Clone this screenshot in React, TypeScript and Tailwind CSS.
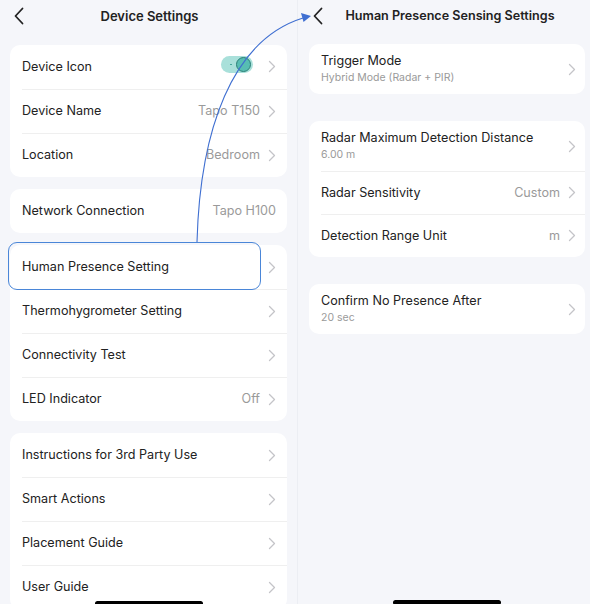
import React from "react";

const Chevron = () => (
  <svg width="8" height="13" viewBox="0 0 8 13" className="shrink-0">
    <path d="M1.5 1.5 L6.5 6.5 L1.5 11.5" fill="none" stroke="#c4c4c8" strokeWidth="1.3" strokeLinecap="round" strokeLinejoin="round" />
  </svg>
);

const Back = () => (
  <svg width="12" height="18" viewBox="0 0 12 18">
    <path d="M9.5 1.5 L2.5 9 L9.5 16.5" fill="none" stroke="#222" strokeWidth="1.8" strokeLinecap="round" strokeLinejoin="round" />
  </svg>
);

type Row = { label: string; value?: React.ReactNode; chevron?: boolean };

const LeftCard = ({ rows }: { rows: Row[] }) => (
  <div className="bg-white rounded-[10px] pl-3 overflow-hidden shrink-0">
    {rows.map((r, i) => (
      <div key={i} className={`h-[44px] flex items-center pr-[11px] ${i > 0 ? "border-t border-[#efefef]" : ""}`}>
        <span className="text-[12.6px] text-[#222]">{r.label}</span>
        <div className="ml-auto flex items-center gap-[8px]">
          {r.value && <span className="text-[12.6px] text-[#9a9a9a]">{r.value}</span>}
          {r.chevron !== false && <Chevron />}
        </div>
      </div>
    ))}
  </div>
);

const Toggle = () => (
  <span className="relative inline-flex items-center w-[32px] h-[17px] rounded-full bg-[#a9e0da] mr-[7px]">
    <span className="absolute left-[9px] top-[8px] w-[1.5px] h-[1.5px] rounded-full bg-[#3a9e93]" />
    <span className="absolute right-[2px] top-[1px] w-[15px] h-[15px] rounded-full bg-[#57bdb2] border border-[#2b7f76]" />
  </span>
);

type RRow = { label: string; sub?: string; value?: string };

const RightCard = ({ rows }: { rows: RRow[] }) => (
  <div className="bg-white rounded-[10px] pl-3 overflow-hidden">
    {rows.map((r, i) => (
      <div
        key={i}
        className={`${r.sub ? "h-[50px]" : "h-[43px]"} flex items-center pr-[9px] ${i > 0 ? "border-t border-[#efefef]" : ""}`}
      >
        <div className="flex flex-col">
          <span className="text-[12.6px] text-[#222] leading-[16px]">{r.label}</span>
          {r.sub && <span className="text-[10.5px] text-[#9a9a9a] leading-[14px] mt-[2px]">{r.sub}</span>}
        </div>
        <div className="ml-auto flex items-center gap-[8px]">
          {r.value && <span className="text-[12.6px] text-[#9a9a9a]">{r.value}</span>}
          <Chevron />
        </div>
      </div>
    ))}
  </div>
);

export default function App() {
  return (
    <div
      className="relative w-[590px] h-[604px] bg-[#f5f6fa] flex overflow-hidden"
      style={{ fontFamily: "Inter, 'Noto Sans', sans-serif" }}
    >
      {/* Left screen */}
      <div className="w-[297px] shrink-0 flex flex-col px-[10px]">
        <div className="h-[33px] shrink-0 relative flex items-center justify-center">
          <span className="absolute left-[3px] top-[7px]"><Back /></span>
          <span className="text-[13px] font-semibold text-[#222] ml-[2px] mt-[1px]">Device Settings</span>
        </div>
        <div className="flex flex-col gap-[12px] mt-[12px] shrink-0">
          <LeftCard
            rows={[
              { label: "Device Icon", value: <Toggle /> },
              { label: "Device Name", value: "Tapo T150" },
              { label: "Location", value: "Bedroom" },
            ]}
          />
          <LeftCard rows={[{ label: "Network Connection", value: "Tapo H100", chevron: false }]} />
          <LeftCard
            rows={[
              { label: "Human Presence Setting" },
              { label: "Thermohygrometer Setting" },
              { label: "Connectivity Test" },
              { label: "LED Indicator", value: "Off" },
            ]}
          />
          <LeftCard
            rows={[
              { label: "Instructions for 3rd Party Use" },
              { label: "Smart Actions" },
              { label: "Placement Guide" },
              { label: "User Guide" },
            ]}
          />
        </div>
      </div>

      {/* Divider */}
      <div className="w-px shrink-0 bg-[#eceef3]" />

      {/* Right screen */}
      <div className="flex-1 flex flex-col pl-[11px] pr-[5px]">
        <div className="h-[33px] shrink-0 relative flex items-center justify-center">
          <span className="absolute left-[3px] top-[7px]"><Back /></span>
          <span className="text-[12.6px] font-semibold text-[#222] ml-[6px]">Human Presence Sensing Settings</span>
        </div>
        <div className="mt-[11px]">
          <RightCard rows={[{ label: "Trigger Mode", sub: "Hybrid Mode (Radar + PIR)" }]} />
        </div>
        <div className="mt-[27px]">
          <RightCard
            rows={[
              { label: "Radar Maximum Detection Distance", sub: "6.00 m" },
              { label: "Radar Sensitivity", value: "Custom" },
              { label: "Detection Range Unit", value: "m" },
            ]}
          />
        </div>
        <div className="mt-[27px]">
          <RightCard rows={[{ label: "Confirm No Presence After", sub: "20 sec" }]} />
        </div>
      </div>

      {/* Highlight box */}
      <div className="absolute left-[8px] top-[242px] w-[253px] h-[48px] rounded-[9px] border border-[#4a86d8]" />

      {/* Arrow */}
      <svg className="absolute left-0 top-0 pointer-events-none" width="590" height="604">
        <path d="M197 242 C 200 130, 232 40, 303 18" fill="none" stroke="#3f6fd1" strokeWidth="1.1" />
        <path d="M311 16 L301 13 L303.5 22 Z" fill="#3f6fd1" />
      </svg>

      {/* Home indicators */}
      <div className="absolute left-[95px] top-[601px] w-[108px] h-[5px] rounded-full bg-black" />
      <div className="absolute left-[393px] top-[600px] w-[108px] h-[5px] rounded-full bg-black" />
    </div>
  );
}
